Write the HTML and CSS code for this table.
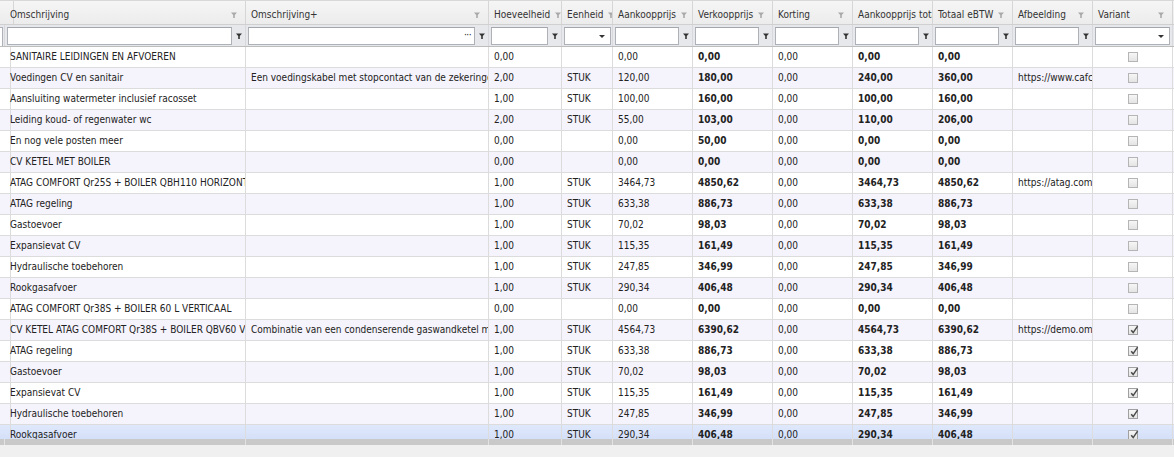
FILE: index.html
```html
<!DOCTYPE html>
<html>
<head>
<meta charset="utf-8">
<link rel="stylesheet" href="styles.css">
</head>
<body>
<div class="grid">
  <div class="row head">
    <div class="c"></div>
    <div class="c"><span class="t">Omschrijving</span><svg class="fi" viewBox="0 0 6 6"><path d="M0 0.5H6L3.8 3V6H2.2V3Z"/></svg></div>
    <div class="c"><span class="t">Omschrijving+</span><svg class="fi" viewBox="0 0 6 6"><path d="M0 0.5H6L3.8 3V6H2.2V3Z"/></svg></div>
    <div class="c"><span class="t">Hoeveelheid</span><svg class="fi" viewBox="0 0 6 6"><path d="M0 0.5H6L3.8 3V6H2.2V3Z"/></svg></div>
    <div class="c"><span class="t">Eenheid</span><svg class="fi" viewBox="0 0 6 6"><path d="M0 0.5H6L3.8 3V6H2.2V3Z"/></svg></div>
    <div class="c"><span class="t">Aankoopprijs</span><svg class="fi" viewBox="0 0 6 6"><path d="M0 0.5H6L3.8 3V6H2.2V3Z"/></svg></div>
    <div class="c"><span class="t">Verkoopprijs</span><svg class="fi" viewBox="0 0 6 6"><path d="M0 0.5H6L3.8 3V6H2.2V3Z"/></svg></div>
    <div class="c"><span class="t">Korting</span><svg class="fi" viewBox="0 0 6 6"><path d="M0 0.5H6L3.8 3V6H2.2V3Z"/></svg></div>
    <div class="c"><span class="t">Aankoopprijs tota</span></div>
    <div class="c"><span class="t">Totaal eBTW</span><svg class="fi" viewBox="0 0 6 6"><path d="M0 0.5H6L3.8 3V6H2.2V3Z"/></svg></div>
    <div class="c"><span class="t">Afbeelding</span><svg class="fi" viewBox="0 0 6 6"><path d="M0 0.5H6L3.8 3V6H2.2V3Z"/></svg></div>
    <div class="c"><span class="t">Variant</span><svg class="fi" viewBox="0 0 6 6"><path d="M0 0.5H6L3.8 3V6H2.2V3Z"/></svg></div>
    <div class="c end"></div>
  </div>
  <div class="row filter">
    <div class="c"><span class="stub"></span></div>
    <div class="c"><span class="inp"></span><span class="fb"><svg viewBox="0 0 6 6"><path d="M0 0.5H6L3.8 3V6H2.2V3Z"/></svg></span></div>
    <div class="c"><span class="inp dots">···</span><span class="fb"><svg viewBox="0 0 6 6"><path d="M0 0.5H6L3.8 3V6H2.2V3Z"/></svg></span></div>
    <div class="c"><span class="inp"></span><span class="fb"><svg viewBox="0 0 6 6"><path d="M0 0.5H6L3.8 3V6H2.2V3Z"/></svg></span></div>
    <div class="c"><span class="inp dd"><i class="arr"></i></span></div>
    <div class="c"><span class="inp"></span><span class="fb"><svg viewBox="0 0 6 6"><path d="M0 0.5H6L3.8 3V6H2.2V3Z"/></svg></span></div>
    <div class="c"><span class="inp"></span><span class="fb"><svg viewBox="0 0 6 6"><path d="M0 0.5H6L3.8 3V6H2.2V3Z"/></svg></span></div>
    <div class="c"><span class="inp"></span><span class="fb"><svg viewBox="0 0 6 6"><path d="M0 0.5H6L3.8 3V6H2.2V3Z"/></svg></span></div>
    <div class="c"><span class="inp"></span><span class="fb"><svg viewBox="0 0 6 6"><path d="M0 0.5H6L3.8 3V6H2.2V3Z"/></svg></span></div>
    <div class="c"><span class="inp"></span><span class="fb"><svg viewBox="0 0 6 6"><path d="M0 0.5H6L3.8 3V6H2.2V3Z"/></svg></span></div>
    <div class="c"><span class="inp"></span><span class="fb"><svg viewBox="0 0 6 6"><path d="M0 0.5H6L3.8 3V6H2.2V3Z"/></svg></span></div>
    <div class="c"><span class="inp dd wide"><i class="arr"></i></span></div>
    <div class="c end"></div>
  </div>
  <div class="body">
    <div class="row"><div class="c"></div><div class="c">SANITAIRE LEIDINGEN EN AFVOEREN</div><div class="c"></div><div class="c">0,00</div><div class="c"></div><div class="c">0,00</div><div class="c b">0,00</div><div class="c">0,00</div><div class="c b">0,00</div><div class="c b">0,00</div><div class="c"></div><div class="c cbc"><span class="cb"></span></div><div class="c end"></div></div>
    <div class="row alt"><div class="c"></div><div class="c">Voedingen CV en sanitair</div><div class="c">Een voedingskabel met stopcontact van de zekeringe</div><div class="c">2,00</div><div class="c">STUK</div><div class="c">120,00</div><div class="c b">180,00</div><div class="c">0,00</div><div class="c b">240,00</div><div class="c b">360,00</div><div class="c">https://www.cafc</div><div class="c cbc"><span class="cb"></span></div><div class="c end"></div></div>
    <div class="row"><div class="c"></div><div class="c">Aansluiting watermeter inclusief racosset</div><div class="c"></div><div class="c">1,00</div><div class="c">STUK</div><div class="c">100,00</div><div class="c b">160,00</div><div class="c">0,00</div><div class="c b">100,00</div><div class="c b">160,00</div><div class="c"></div><div class="c cbc"><span class="cb"></span></div><div class="c end"></div></div>
    <div class="row alt"><div class="c"></div><div class="c">Leiding koud- of regenwater wc</div><div class="c"></div><div class="c">2,00</div><div class="c">STUK</div><div class="c">55,00</div><div class="c b">103,00</div><div class="c">0,00</div><div class="c b">110,00</div><div class="c b">206,00</div><div class="c"></div><div class="c cbc"><span class="cb"></span></div><div class="c end"></div></div>
    <div class="row"><div class="c"></div><div class="c">En nog vele posten meer</div><div class="c"></div><div class="c">0,00</div><div class="c"></div><div class="c">0,00</div><div class="c b">50,00</div><div class="c">0,00</div><div class="c b">0,00</div><div class="c b">0,00</div><div class="c"></div><div class="c cbc"><span class="cb"></span></div><div class="c end"></div></div>
    <div class="row alt"><div class="c"></div><div class="c">CV KETEL MET BOILER</div><div class="c"></div><div class="c">0,00</div><div class="c"></div><div class="c">0,00</div><div class="c b">0,00</div><div class="c">0,00</div><div class="c b">0,00</div><div class="c b">0,00</div><div class="c"></div><div class="c cbc"><span class="cb"></span></div><div class="c end"></div></div>
    <div class="row"><div class="c"></div><div class="c">ATAG COMFORT Qr25S + BOILER QBH110 HORIZONT</div><div class="c"></div><div class="c">1,00</div><div class="c">STUK</div><div class="c">3464,73</div><div class="c b">4850,62</div><div class="c">0,00</div><div class="c b">3464,73</div><div class="c b">4850,62</div><div class="c">https://atag.com</div><div class="c cbc"><span class="cb"></span></div><div class="c end"></div></div>
    <div class="row alt"><div class="c"></div><div class="c">ATAG regeling</div><div class="c"></div><div class="c">1,00</div><div class="c">STUK</div><div class="c">633,38</div><div class="c b">886,73</div><div class="c">0,00</div><div class="c b">633,38</div><div class="c b">886,73</div><div class="c"></div><div class="c cbc"><span class="cb"></span></div><div class="c end"></div></div>
    <div class="row"><div class="c"></div><div class="c">Gastoevoer</div><div class="c"></div><div class="c">1,00</div><div class="c">STUK</div><div class="c">70,02</div><div class="c b">98,03</div><div class="c">0,00</div><div class="c b">70,02</div><div class="c b">98,03</div><div class="c"></div><div class="c cbc"><span class="cb"></span></div><div class="c end"></div></div>
    <div class="row alt"><div class="c"></div><div class="c">Expansievat CV</div><div class="c"></div><div class="c">1,00</div><div class="c">STUK</div><div class="c">115,35</div><div class="c b">161,49</div><div class="c">0,00</div><div class="c b">115,35</div><div class="c b">161,49</div><div class="c"></div><div class="c cbc"><span class="cb"></span></div><div class="c end"></div></div>
    <div class="row"><div class="c"></div><div class="c">Hydraulische toebehoren</div><div class="c"></div><div class="c">1,00</div><div class="c">STUK</div><div class="c">247,85</div><div class="c b">346,99</div><div class="c">0,00</div><div class="c b">247,85</div><div class="c b">346,99</div><div class="c"></div><div class="c cbc"><span class="cb"></span></div><div class="c end"></div></div>
    <div class="row alt"><div class="c"></div><div class="c">Rookgasafvoer</div><div class="c"></div><div class="c">1,00</div><div class="c">STUK</div><div class="c">290,34</div><div class="c b">406,48</div><div class="c">0,00</div><div class="c b">290,34</div><div class="c b">406,48</div><div class="c"></div><div class="c cbc"><span class="cb"></span></div><div class="c end"></div></div>
    <div class="row"><div class="c"></div><div class="c">ATAG COMFORT Qr38S + BOILER 60 L VERTICAAL</div><div class="c"></div><div class="c">0,00</div><div class="c"></div><div class="c">0,00</div><div class="c b">0,00</div><div class="c">0,00</div><div class="c b">0,00</div><div class="c b">0,00</div><div class="c"></div><div class="c cbc"><span class="cb"></span></div><div class="c end"></div></div>
    <div class="row alt"><div class="c"></div><div class="c">CV KETEL ATAG COMFORT Qr38S + BOILER QBV60 V</div><div class="c">Combinatie van een condenserende gaswandketel me</div><div class="c">1,00</div><div class="c">STUK</div><div class="c">4564,73</div><div class="c b">6390,62</div><div class="c">0,00</div><div class="c b">4564,73</div><div class="c b">6390,62</div><div class="c">https://demo.om</div><div class="c cbc"><span class="cb on"><svg viewBox="0 0 10 10"><path d="M2.2 5.2L4.2 7.6L8.6 1.2"/></svg></span></div><div class="c end"></div></div>
    <div class="row"><div class="c"></div><div class="c">ATAG regeling</div><div class="c"></div><div class="c">1,00</div><div class="c">STUK</div><div class="c">633,38</div><div class="c b">886,73</div><div class="c">0,00</div><div class="c b">633,38</div><div class="c b">886,73</div><div class="c"></div><div class="c cbc"><span class="cb on"><svg viewBox="0 0 10 10"><path d="M2.2 5.2L4.2 7.6L8.6 1.2"/></svg></span></div><div class="c end"></div></div>
    <div class="row alt"><div class="c"></div><div class="c">Gastoevoer</div><div class="c"></div><div class="c">1,00</div><div class="c">STUK</div><div class="c">70,02</div><div class="c b">98,03</div><div class="c">0,00</div><div class="c b">70,02</div><div class="c b">98,03</div><div class="c"></div><div class="c cbc"><span class="cb on"><svg viewBox="0 0 10 10"><path d="M2.2 5.2L4.2 7.6L8.6 1.2"/></svg></span></div><div class="c end"></div></div>
    <div class="row"><div class="c"></div><div class="c">Expansievat CV</div><div class="c"></div><div class="c">1,00</div><div class="c">STUK</div><div class="c">115,35</div><div class="c b">161,49</div><div class="c">0,00</div><div class="c b">115,35</div><div class="c b">161,49</div><div class="c"></div><div class="c cbc"><span class="cb on"><svg viewBox="0 0 10 10"><path d="M2.2 5.2L4.2 7.6L8.6 1.2"/></svg></span></div><div class="c end"></div></div>
    <div class="row alt"><div class="c"></div><div class="c">Hydraulische toebehoren</div><div class="c"></div><div class="c">1,00</div><div class="c">STUK</div><div class="c">247,85</div><div class="c b">346,99</div><div class="c">0,00</div><div class="c b">247,85</div><div class="c b">346,99</div><div class="c"></div><div class="c cbc"><span class="cb on"><svg viewBox="0 0 10 10"><path d="M2.2 5.2L4.2 7.6L8.6 1.2"/></svg></span></div><div class="c end"></div></div>
    <div class="row sel"><div class="c"></div><div class="c">Rookgasafvoer</div><div class="c"></div><div class="c">1,00</div><div class="c">STUK</div><div class="c">290,34</div><div class="c b">406,48</div><div class="c">0,00</div><div class="c b">290,34</div><div class="c b">406,48</div><div class="c"></div><div class="c cbc"><span class="cb on"><svg viewBox="0 0 10 10"><path d="M2.2 5.2L4.2 7.6L8.6 1.2"/></svg></span></div><div class="c end"></div></div>
  </div>
  <div class="row hbar">
    <div class="c"></div><div class="c"></div><div class="c"></div><div class="c"></div><div class="c"></div><div class="c"></div><div class="c"></div><div class="c"></div><div class="c"></div><div class="c"></div><div class="c"></div><div class="c"></div><div class="c end"></div>
  </div>
  <div class="foot"></div>
</div>
</body>
</html>
```
FILE: styles.css
```css
html, body {
  margin: 0;
  padding: 0;
}
body {
  background: #f0f0f0;
  font-family: "DejaVu Sans Condensed", "DejaVu Sans", sans-serif;
  font-size: 10px;
  color: #222;
  width: 1174px;
  height: 457px;
  overflow: hidden;
}
.grid {
  width: 1174px;
  background: #fff;
}
.row {
  display: grid;
  grid-template-columns: 5px 241px 243px 73px 51px repeat(7, 80px) 1px;
}
.c {
  box-sizing: border-box;
  border-right: 1px solid #dcdcdc;
  overflow: hidden;
  white-space: nowrap;
}
.c.end {
  border-right: 0;
}

/* header */
.head {
  height: 25px;
  box-sizing: border-box;
  border-top: 1px solid #d8d8d8;
  border-bottom: 1px solid #d0d0d0;
  background: linear-gradient(#f5f5f5, #ececec);
  color: #333;
}
.head .c {
  display: flex;
  align-items: center;
  padding: 4px 8px 0 5px;
  border-right-color: #d6d6d6;
}
.head .t {
  flex: 0 0 auto;
  margin-right: 5px;
}
.head .fi {
  flex: 0 0 auto;
  width: 6px;
  height: 6px;
  margin-left: auto;
  fill: #a9a9a9;
}

/* filter row */
.filter {
  height: 22px;
  box-sizing: border-box;
  border-bottom: 1px solid #bdbdbd;
  background: #e7e8ec;
}
.filter .c {
  display: flex;
  align-items: flex-start;
  padding: 2px 0 0 2px;
  border-right-color: #d9d9dd;
}
.filter .inp {
  flex: 1 1 auto;
  min-width: 0;
  height: 18px;
  box-sizing: border-box;
  border: 1px solid #aeb1b8;
  border-top-color: #a3a6ad;
  background: #fff;
  position: relative;
}
.filter .stub {
  display: block;
  width: 2px;
  height: 18px;
  margin-left: -2px;
  border: 1px solid #aeb1b8;
  border-left: 0;
  background: #fff;
}
.filter .dots {
  text-align: right;
  padding-right: 3px;
  line-height: 14px;
  font-size: 10px;
  color: #222;
  letter-spacing: -0.5px;
}
.filter .dd {
  margin-right: 1px;
}
.filter .dd.wide {
  margin-right: 2px;
}
.filter .arr {
  position: absolute;
  right: 5px;
  top: 7px;
  width: 0;
  height: 0;
  border-left: 3px solid transparent;
  border-right: 3px solid transparent;
  border-top: 3px solid #333;
}
.filter .fb {
  flex: 0 0 13px;
  height: 18px;
  display: flex;
  align-items: center;
  justify-content: center;
}
.filter .fb svg {
  width: 6px;
  height: 6px;
  fill: #333;
}

/* body */
.body {
  height: 392px;
  overflow: hidden;
}
.body .row {
  height: 21px;
  box-sizing: border-box;
  border-bottom: 1px solid #dcdcdc;
  background: #fff;
}
.body .row.alt {
  background: #f5f3fb;
}
.body .row.sel {
  background: linear-gradient(#dfe8fb, #d0ddf8);
}
.body .c {
  padding: 0 5px;
  line-height: 19px;
}
.body .c.b {
  font-weight: bold;
}
.body .c.cbc {
  display: flex;
  align-items: center;
  justify-content: center;
  padding: 0 0 1px 1px;
}
.cb {
  display: block;
  width: 10px;
  height: 10px;
  box-sizing: border-box;
  border: 1px solid #b5b5b5;
  background: linear-gradient(#f6f6f6, #e4e4e4);
  position: relative;
}
.cb.on {
  border-color: #a0a0a0;
}
.cb svg {
  position: absolute;
  left: 0;
  top: -1px;
  width: 10px;
  height: 10px;
  fill: none;
  stroke: #4a4a4a;
  stroke-width: 1.5;
}

/* horizontal bar and footer */
.hbar {
  height: 6px;
  background: #c9c9c9;
}
.hbar .c {
  border-right-color: #e2e2e2;
}
.foot {
  height: 12px;
  background: #f0f0f0;
}
```
